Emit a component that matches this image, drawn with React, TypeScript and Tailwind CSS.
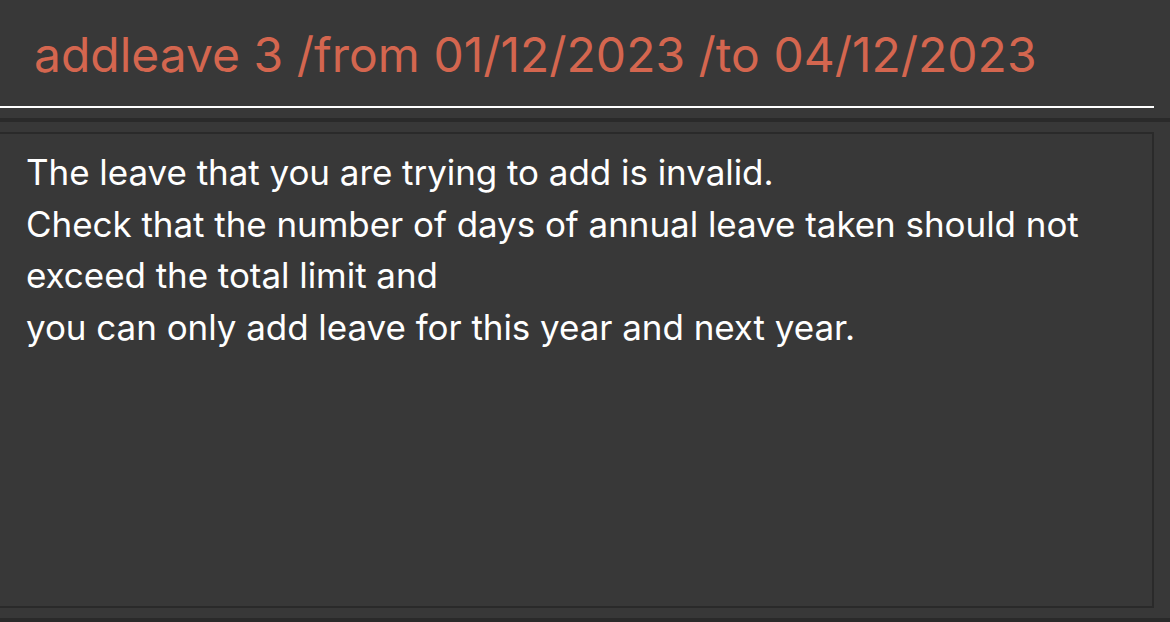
export default function App() {
  return (
    <div className="flex h-[622px] w-[1170px] flex-col overflow-hidden bg-[#383838] font-['Inter',sans-serif]">
      <div className="h-[106px] shrink-0 pl-[34px] pt-[26px]">
        <p className="text-[48px] leading-[58px] text-[#d4664f]">
          addleave 3 /from 01/12/2023 /to 04/12/2023
        </p>
      </div>
      <div className="h-[2px] w-[1154px] shrink-0 bg-white" />
      <div className="h-[10px] shrink-0" />
      <div className="h-[4px] shrink-0 bg-[#2a2a2a]" />
      <div className="h-[10px] shrink-0" />
      <div className="h-[476px] w-[1154px] shrink-0 border-2 border-l-0 border-[#2a2a2a] pl-[26px] pt-[13px]">
        <p className="text-[35px] leading-[51.5px] tracking-[-0.05px] text-white">
          The leave that you are trying to add is invalid.
          <br />
          Check that the number of days of annual leave taken should not
          <br />
          exceed the total limit and
          <br />
          you can only add leave for this year and next year.
        </p>
      </div>
      <div className="h-[10px] shrink-0" />
      <div className="h-[4px] shrink-0 bg-[#2a2a2a]" />
    </div>
  );
}
